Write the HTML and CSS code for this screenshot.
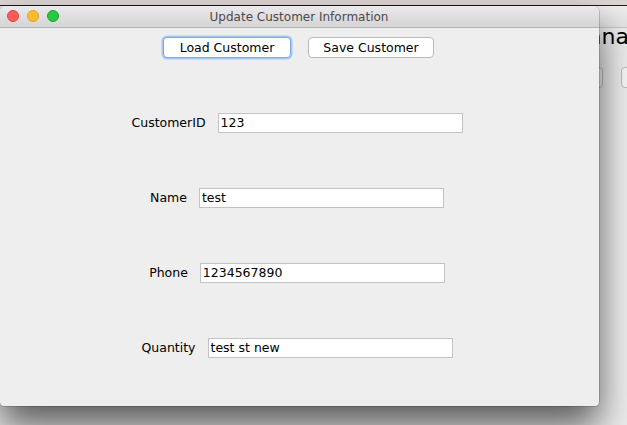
FILE: index.html
```html
<!DOCTYPE html>
<html>
<head>
<meta charset="utf-8">
<link rel="stylesheet" href="styles.css">
</head>
<body>
<div class="desk">
  <div class="topstrip"></div>
  <div class="backwin">
    <div class="back-title"></div>
    <div class="back-body">
      <div class="back-heading">Mana</div>
      <div class="back-buttons">
        <span class="back-btn"></span>
        <span class="back-btn"></span>
      </div>
    </div>
  </div>
  <div class="window">
    <div class="titlebar">
      <div class="lights">
        <span class="light red"></span>
        <span class="light yellow"></span>
        <span class="light green"></span>
      </div>
      <div class="title">Update Customer Information</div>
    </div>
    <div class="content">
      <div class="buttons">
        <button class="btn focused">Load Customer</button>
        <button class="btn">Save Customer</button>
      </div>
      <div class="row"><span class="label">CustomerID</span><span class="field">123</span></div>
      <div class="row"><span class="label">Name</span><span class="field">test</span></div>
      <div class="row"><span class="label">Phone</span><span class="field">1234567890</span></div>
      <div class="row"><span class="label">Quantity</span><span class="field">test st new</span></div>
    </div>
  </div>
</div>
</body>
</html>
```
FILE: styles.css
```css
html, body {
  margin: 0;
  padding: 0;
  width: 627px;
  height: 425px;
  overflow: hidden;
  font-family: "DejaVu Sans", Verdana, sans-serif;
}
.desk {
  position: relative;
  width: 627px;
  height: 425px;
  background: #ececec;
  overflow: hidden;
}
.topstrip {
  height: 5px;
  background: #ddd5d3;
  border-bottom: 1px solid #1e1e1e;
}
.backwin {
  position: absolute;
  left: 300px;
  top: 6px;
  width: 400px;
  height: 430px;
  background: #ececec;
}
.back-title {
  height: 21px;
  background: linear-gradient(#eeeeee, #e2e2e2);
  border-bottom: 1px solid #c8c8c8;
}
.back-body {
  padding-left: 269px;
}
.back-heading {
  font-size: 22px;
  color: #000;
  line-height: 26px;
  margin-top: -4px;
  white-space: nowrap;
}
.back-buttons {
  display: flex;
  gap: 18px;
  margin-top: 17px;
  margin-left: -3px;
}
.back-btn {
  width: 35px;
  height: 19px;
  border: 1px solid #bdbdbd;
  border-radius: 4px;
  background: #f6f6f6;
}
.window {
  position: absolute;
  left: 0;
  top: 6px;
  width: 599px;
  height: 400px;
  background: #eeeeee;
  border-radius: 5px 5px 4px 4px;
  box-shadow: 0 20px 36px rgba(0,0,0,0.62), 0 0 0 0.5px rgba(0,0,0,0.3);
  display: flex;
  flex-direction: column;
}
.titlebar {
  position: relative;
  height: 21px;
  background: linear-gradient(#ebe9eb, #d5d3d5);
  border-bottom: 1px solid #b4b4b4;
  border-radius: 5px 5px 0 0;
  display: flex;
  align-items: center;
  justify-content: center;
}
.lights {
  position: absolute;
  left: 7px;
  top: 4px;
  display: flex;
  gap: 8px;
}
.light {
  width: 12px;
  height: 12px;
  border-radius: 50%;
  box-sizing: border-box;
}
.red { background: #fc5b57; border: 0.5px solid #e0443e; }
.yellow { background: #fdbb2d; border: 0.5px solid #dea123; }
.green { background: #27c840; border: 0.5px solid #1aab29; }
.title {
  font-size: 12px;
  color: #4a4a4a;
  margin-left: -1px;
}
.content {
  display: flex;
  flex-direction: column;
  align-items: center;
  gap: 55px;
  padding-top: 9px;
  padding-right: 5px;
}
.buttons {
  display: flex;
  gap: 17px;
  margin-left: 3px;
}
.btn {
  font-family: "DejaVu Sans", Verdana, sans-serif;
  font-size: 12.5px;
  color: #000;
  height: 21px;
  padding: 0;
  background: #ffffff;
  border: 1px solid #b9b9b9;
  border-radius: 4px;
  line-height: 18px;
}
.btn:first-child { width: 128px; }
.btn:last-child { width: 126px; }
.btn.focused {
  border: 1px solid #7fa9e6;
  box-shadow: 0 0 0 1.5px #a8c6f2;
}
.row {
  display: flex;
  align-items: center;
  gap: 12px;
  height: 20px;
  font-size: 12.5px;
  color: #000;
}
.label {
  line-height: 20px;
}
.field {
  width: 245px;
  height: 20px;
  box-sizing: border-box;
  background: #ffffff;
  border: 1px solid #c3c3c3;
  padding-left: 2px;
  line-height: 18px;
  color: #000;
}
```
